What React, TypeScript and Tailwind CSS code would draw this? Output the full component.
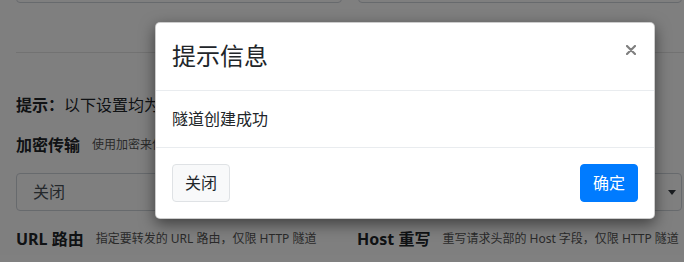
import React from "react";

const FONT = "font-['Noto_Sans','Noto_Sans_CJK_SC',sans-serif]";

type FieldProps = {
  label: string;
  hint: string;
};

const FieldLabel = ({ label, hint }: FieldProps) => {
  return (
    <div className="flex h-6 items-center whitespace-nowrap">
      <span className="text-[16px] font-bold text-[#212529]">{label}</span>
      <span className="ml-3 text-[12px] text-[#555]">{hint}</span>
    </div>
  );
};

const Select = ({ value }: { value: string }) => {
  return (
    <div className="relative mt-4 flex h-[38px] items-center rounded-[4px] border border-[#ced4da] bg-white px-4 text-[16px] text-[#495057]">
      {value}
      <svg
        width="8"
        height="5"
        viewBox="0 0 8 5"
        className="absolute right-[5px] top-[16px] text-[#343a40]"
      >
        <path d="M0 0h8L4 5z" fill="currentColor" />
      </svg>
    </div>
  );
};

export default function App() {
  return (
    <div
      className={`relative h-[262px] w-[684px] overflow-hidden bg-white ${FONT}`}
    >
      {/* page behind the dialog, scrolled a bit */}
      <div className="-mt-[35px] pl-4">
        <div className="grid grid-cols-[326px_324px] gap-4">
          <div className="h-[38px] rounded-[4px] border border-[#ced4da]" />
          <div className="h-[38px] rounded-[4px] border border-[#ced4da]" />
        </div>

        <hr className="mt-[49px] border-t border-black/10" />

        <p className="mt-[40px] text-[16px] leading-6 text-[#212529]">
          <span className="font-bold">提示：</span>以下设置均为可选
        </p>

        <div className="mt-4 grid grid-cols-[326px_324px] gap-4">
          <div>
            <FieldLabel label="加密传输" hint="使用加密来保护传输数据" />
            <Select value="关闭" />
            <div className="mt-4">
              <FieldLabel
                label="URL 路由"
                hint="指定要转发的 URL 路由，仅限 HTTP 隧道"
              />
            </div>
          </div>
          <div className="-ml-px">
            <FieldLabel label="数据压缩" hint="压缩传输的数据" />
            <Select value="关闭" />
            <div className="mt-4">
              <FieldLabel
                label="Host 重写"
                hint="重写请求头部的 Host 字段，仅限 HTTP 隧道"
              />
            </div>
          </div>
        </div>
      </div>

      {/* backdrop */}
      <div className="absolute inset-0 bg-black/50" />

      {/* dialog */}
      <div className="absolute left-[155px] top-[22px] w-[500px] rounded-[5px] border border-black/20 bg-white text-[#212529] shadow-[0_5px_15px_rgba(0,0,0,0.5)]">
        <div className="flex items-start justify-between border-b border-[#e9ecef] px-4 pb-4 pt-[15px]">
          <h5 className="text-[24px] leading-[1.5]">提示信息</h5>
          <svg
            width="10"
            height="10"
            viewBox="0 0 10 10"
            className="mr-[2px] mt-[7px] text-black/50"
          >
            <path
              d="M1 1l8 8M9 1l-8 8"
              stroke="currentColor"
              strokeWidth="2.2"
              strokeLinecap="round"
            />
          </svg>
        </div>

        <div className="p-4 text-[16px] leading-6">隧道创建成功</div>

        <div className="flex items-center justify-between border-t border-[#e9ecef] p-4">
          <button className="h-[38px] rounded-[4px] border border-[#dfe2e5] bg-[#f8f9fa] px-3 text-[16px] text-[#212529]">
            关闭
          </button>
          <button className="h-[38px] rounded-[4px] border border-[#007bff] bg-[#007bff] px-3 text-[16px] text-white">
            确定
          </button>
        </div>
      </div>
    </div>
  );
}
